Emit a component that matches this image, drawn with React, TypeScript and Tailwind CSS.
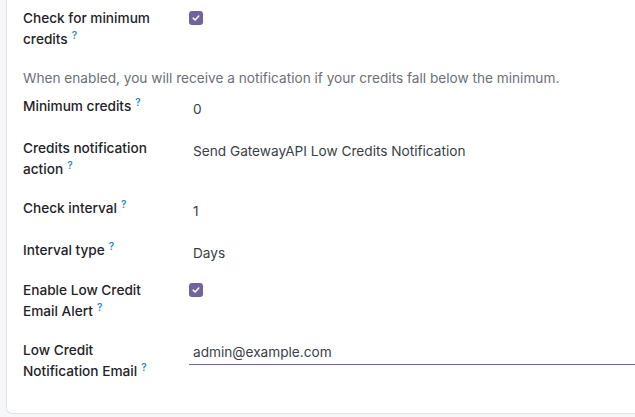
import type { ReactNode } from "react";

function Help() {
  return (
    <sup className="ml-[4px] text-[10px] font-semibold text-[#2b8ac4]">?</sup>
  );
}

function Check() {
  return (
    <span className="mt-[2px] flex h-[14px] w-[14px] items-center justify-center rounded-[3px] bg-[#71639e]">
      <svg viewBox="0 0 12 12" className="h-[10px] w-[10px]" fill="none">
        <path
          d="M2.6 6.2 L4.9 8.4 L9.4 3.7"
          stroke="white"
          strokeWidth="1.8"
          strokeLinecap="round"
          strokeLinejoin="round"
        />
      </svg>
    </span>
  );
}

function Row({
  label,
  children,
  className = "",
}: {
  label: ReactNode;
  children: ReactNode;
  className?: string;
}) {
  return (
    <div className={`flex ${className}`}>
      <div className="w-[166px] shrink-0 pr-[26px] font-medium text-[#1f2328]">{label}</div>
      <div className="flex-1">{children}</div>
    </div>
  );
}

function Value({ children }: { children: ReactNode }) {
  return <div className="-mb-[3px] pl-[4px] pt-[3px] text-[#3a3f45]">{children}</div>;
}

export default function App() {
  return (
    <div className="h-[417px] w-[635px] overflow-hidden bg-[#f6f7f9] pb-[3px] pl-[6px] font-['Inter',sans-serif] text-[13.65px] leading-[21px]">
      <div className="h-full w-[660px] rounded-bl-md border-b border-l border-[#e2e3e7] bg-white pl-4 pt-2">
        <Row label={<>Check for minimum credits<Help /></>} className="mb-[18px]">
          <div className="pt-[1px]">
            <Check />
          </div>
        </Row>

        <p className="mb-[7px] text-[#6c7077]">
          When enabled, you will receive a notification if your credits fall below the minimum.
        </p>

        <Row label={<>Minimum credits<Help /></>} className="mb-[21px]">
          <Value>0</Value>
        </Row>

        <Row label={<>Credits notification action<Help /></>} className="mb-[18px]">
          <Value>Send GatewayAPI Low Credits Notification</Value>
        </Row>

        <Row label={<>Check interval<Help /></>} className="mb-[21px]">
          <Value>1</Value>
        </Row>

        <Row label={<>Interval type<Help /></>} className="mb-[19px]">
          <Value>Days</Value>
        </Row>

        <Row label={<>Enable Low Credit Email Alert<Help /></>} className="mb-[18px]">
          <div className="pt-[1px]">
            <Check />
          </div>
        </Row>

        <Row label={<>Low Credit Notification Email<Help /></>}>
          <div className="border-b border-[#71639e] pb-[1px] pl-[4px] pt-[2px] text-[#3a3f45]">
            admin@example.com
          </div>
        </Row>
      </div>
    </div>
  );
}
